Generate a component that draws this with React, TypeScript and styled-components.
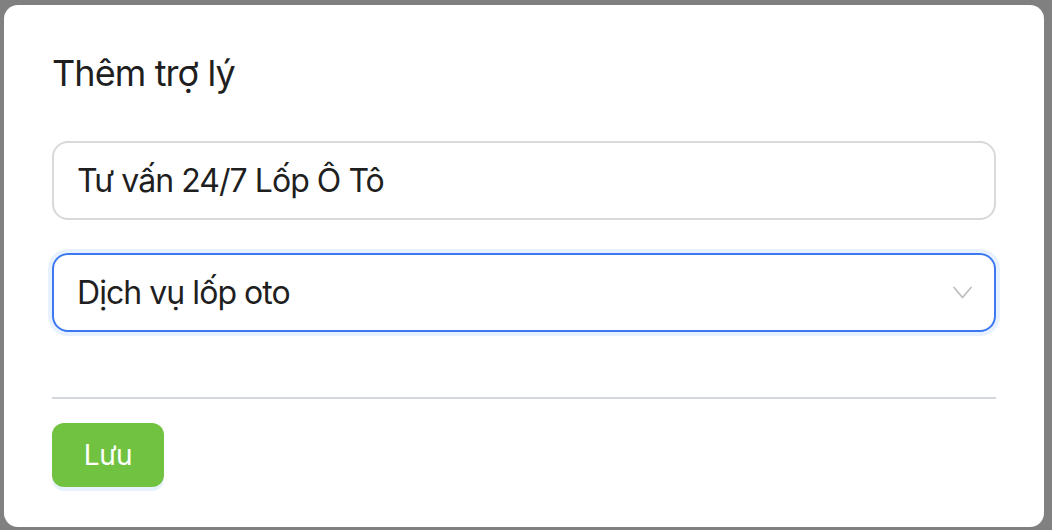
import React from "react";
import styled, { createGlobalStyle } from "styled-components";

const Global = createGlobalStyle`
  html, body { margin: 0; padding: 0; }
  body {
    background: #808080;
    font-family: Inter, "Noto Sans", "Liberation Sans", sans-serif;
    -webkit-font-smoothing: antialiased;
  }
`;

const Backdrop = styled.div`
  width: 1052px;
  height: 530px;
  box-sizing: border-box;
  padding: 5px 8px 3px 4px;
  background: #808080;
  overflow: hidden;
`;

const Modal = styled.div`
  width: 1040px;
  height: 522px;
  box-sizing: border-box;
  background: #ffffff;
  border-radius: 14px;
  padding: 46px 48px 40px 48px;
  display: flex;
  flex-direction: column;
`;

const Title = styled.h2`
  margin: 0;
  font-size: 36px;
  line-height: 44px;
  font-weight: 400;
  color: #1f1f1f;
  letter-spacing: -0.9px;
`;

const Form = styled.div`
  margin-top: 46px;
  display: flex;
  flex-direction: column;
  gap: 33px;
`;

const Field = styled.div<{ $focused?: boolean }>`
  height: 79px;
  box-sizing: border-box;
  border-radius: 16px;
  border: 2px solid ${(p) => (p.$focused ? "#3b78f2" : "#d9d9d9")};
  box-shadow: ${(p) => (p.$focused ? "0 0 0 4px #e8f1fe" : "none")};
  display: flex;
  align-items: center;
  padding: 0 22px 0 23px;
  font-size: 32px;
  color: #1f1f1f;
  letter-spacing: -0.95px;
`;

const FieldText = styled.span`
  flex: 1;
  white-space: nowrap;
`;

const Chevron = styled.svg`
  width: 19px;
  height: 13px;
  flex: none;
`;

const Divider = styled.hr`
  margin: 65px 0 0 0;
  border: none;
  height: 2px;
  background: #d3d7dd;
`;

const Footer = styled.div`
  margin-top: 24px;
  display: flex;
`;

const SaveButton = styled.button`
  width: 112px;
  height: 64px;
  border: none;
  border-radius: 12px;
  background: #72c241;
  color: #ffffff;
  font-family: inherit;
  font-size: 28px;
  font-weight: 400;
  letter-spacing: -0.4px;
  box-shadow: 0 4px 0 #e8f2fc;
  cursor: pointer;
  padding: 0;
`;

export default function App() {
  return (
    <>
      <Global />
      <Backdrop>
        <Modal>
          <Title>Thêm trợ lý</Title>
          <Form>
            <Field>
              <FieldText>Tư vấn 24/7 Lốp Ô Tô</FieldText>
            </Field>
            <Field $focused>
              <FieldText>Dịch vụ lốp oto</FieldText>
              <Chevron viewBox="0 0 19 13" fill="none">
                <path d="M1 1.5 L9.5 11.5 L18 1.5" stroke="#bfbfbf" strokeWidth="1.8" strokeLinecap="round" strokeLinejoin="round" />
              </Chevron>
            </Field>
          </Form>
          <Divider />
          <Footer>
            <SaveButton>Lưu</SaveButton>
          </Footer>
        </Modal>
      </Backdrop>
    </>
  );
}
